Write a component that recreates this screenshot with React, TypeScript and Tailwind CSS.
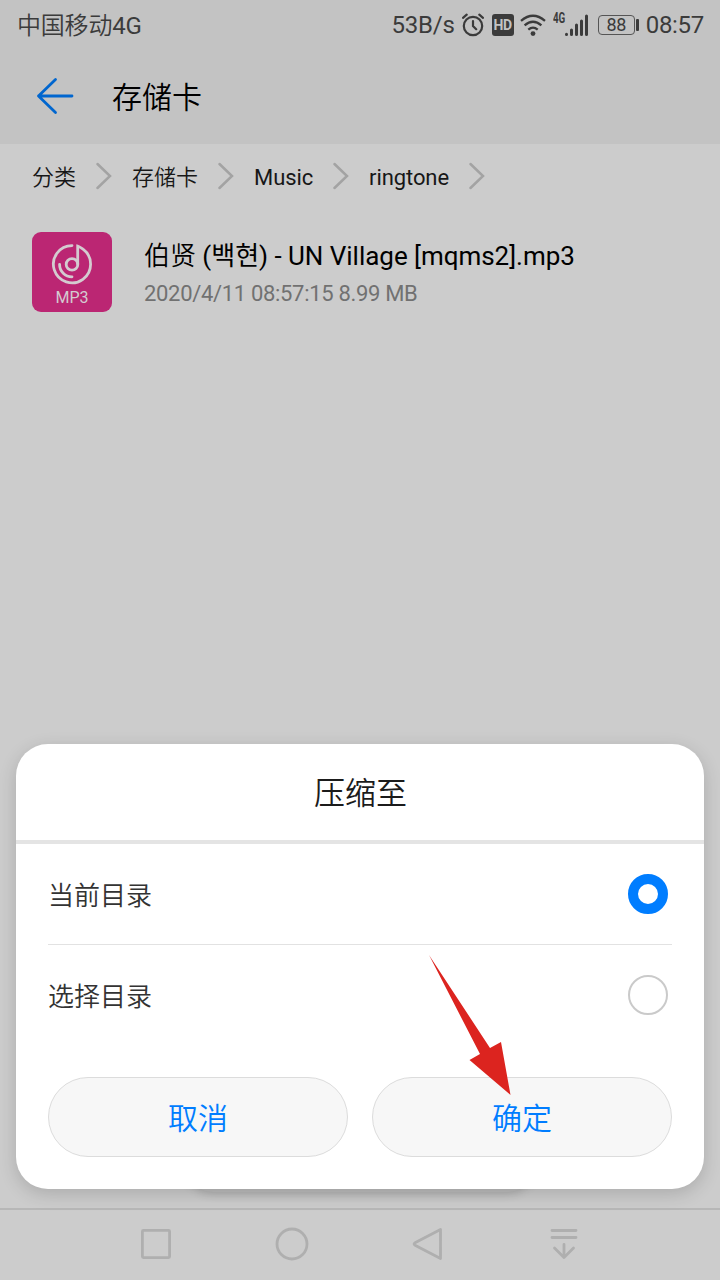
import React, { useState } from 'react';

const crumbs = ['分类', '存储卡', 'Music', 'ringtone'];
const options = ['当前目录', '选择目录'];

const StatusBar = () => (
	<div className="flex h-[50px] items-center justify-between pl-[17px] pr-4 text-2xl leading-none text-[#3b3b3b]">
		<span className="pt-px tracking-[-0.2px]">
			<span className="font-[350]">中国移动</span>4G
		</span>
		<div className="flex items-center">
			<span className="mr-[7px] tracking-[-0.2px]">53B/s</span>
			<svg className="mr-[8px]" width="22" height="24" viewBox="0 0 22 24" fill="none" stroke="#3b3b3b" strokeWidth="2.2" strokeLinecap="round">
				<circle cx="11" cy="13" r="9.2" />
				<path d="M11 8v5l3.2 3.2M1 4.8 4.7 1.7M21 4.8 17.3 1.7" />
			</svg>
			<span className="mr-[6px] flex h-[22px] w-[22px] items-center justify-center rounded-[3px] bg-[#3b3b3b] text-[14px] font-bold tracking-tight text-[#c3c3c3]">
				HD
			</span>
			<svg className="mr-[7px]" width="26" height="24" viewBox="0 0 26 24" fill="none" stroke="#3b3b3b" strokeWidth="2.3">
				<path d="M1 7.8Q13-2.4 25 7.8M4.6 12.4Q13 5.2 21.4 12.4M8.3 16.6Q13 12.6 17.7 16.6" />
				<circle cx="13" cy="20.6" r="2.4" fill="#3b3b3b" stroke="none" />
			</svg>
			<span className="-mt-[6px] h-[24px] w-[12px] origin-left scale-x-[0.7] text-[14px] font-bold leading-[16px]">4G</span>
			<svg className="-mt-px mr-[10px]" width="23" height="24" viewBox="0 0 23 24" fill="none" stroke="#3b3b3b" strokeWidth="3" strokeLinecap="round">
				<path d="M1.5 21.3v.2M6.5 17v4.5M11.5 12v9.5M16.5 8v13.5M21.5 3v18.5" />
			</svg>
			<span className="flex h-[20px] w-[37px] items-center justify-center rounded-[4px] border border-[#555] text-[18px] tracking-[-0.4px]">
				88
			</span>
			<span className="ml-px mr-[7px] h-[12px] w-[3px] rounded-[1px] bg-[#3b3b3b]" />
			<span className="tracking-[-0.3px]">08:57</span>
		</div>
	</div>
);

const Mp3Icon = () => (
	<div className="flex h-20 w-20 flex-col items-center rounded-[9px] bg-[#bb2673] pt-[11px] text-[#d4cbd0]">
		<svg width="42" height="42" viewBox="0 0 42 42" fill="none" stroke="currentColor" strokeWidth="2.8" strokeLinecap="round">
			<path d="M21 2.6A18.6 18.6 0 1 0 32 6.2Q28.5 3.5 26.7 3V21" />
			<circle cx="21" cy="21.4" r="5.8" />
			<path d="M8.6 21.4A12.4 12.4 0 0 0 21 33.8" />
		</svg>
		<span className="mt-[5px] text-[16px] leading-[16px]">MP3</span>
	</div>
);

const NavBar = () => (
	<div className="flex h-[72px] w-full items-start border-t-2 border-[#b7b7b7] pl-[138px] pt-[15px]">
		<svg width="444" height="40" viewBox="0 0 444 40" fill="none" stroke="#afafaf" strokeWidth="2.8" strokeLinecap="round" strokeLinejoin="round">
			<rect x="4.4" y="5.4" width="27.2" height="27.2" rx="1" />
			<circle cx="154" cy="19" r="15" />
			<path d="M302.5 4.5v29L277 20.2q-1.8-1.2 0-2.4z" />
			<path d="M414 5.5h24M414 12.5h24M426 19.5v13M416.5 23l9.5 9.6 9.5-9.6" />
		</svg>
	</div>
);

const App = () => {
	const [selected, setSelected] = useState(0);

	return (
		<div className="relative flex h-[1280px] w-[720px] flex-col overflow-hidden bg-[#cccccc] font-['Roboto','Noto_Sans_CJK_SC','Noto_Sans_CJK_KR',sans-serif]">
			<div className="h-36 bg-[#c3c3c3]">
				<StatusBar />
				<div className="flex h-[94px] items-center pl-[36px]">
					<svg className="mr-[38px] -mt-[3px]" width="38" height="38" viewBox="0 0 38 38" fill="none" stroke="#0066cf" strokeWidth="2.8" strokeLinecap="round" strokeLinejoin="round">
						<path d="M19.5 2.5 2.5 19l17 16.5M2.5 19H36" />
					</svg>
					<span className="pt-px text-[30px] font-[350] leading-none text-black">存储卡</span>
				</div>
			</div>

			<div className="flex h-[66px] items-center pl-8 text-[22px] text-[#171717]">
				{crumbs.map((crumb) => (
					<div key={crumb} className="flex items-center">
						<span className={/[a-z]/.test(crumb) ? 'tracking-[-0.1px]' : 'pt-px font-[350]'}>{crumb}</span>
						<svg className="-mt-[3px] ml-[20px] mr-[20px]" width="16" height="28" viewBox="0 0 16 28" fill="none" stroke="#a3a3a3" strokeWidth="2.5" strokeLinecap="round">
							<path d="M1.5 2 14 14 1.5 26" />
						</svg>
					</div>
				))}
			</div>

			<div className="flex flex-1 items-start gap-8 pl-8 pt-[22px]">
				<Mp3Icon />
				<div className="flex flex-col pt-[5px]">
					<span className="text-[26px] leading-[38px] tracking-[-0.03px] text-black">
						<span className="font-[350]">伯贤</span> (백현) - UN Village [mqms2].mp3
					</span>
					<span className="text-[22px] leading-[38px] tracking-[-0.32px] text-[#717171]">2020/4/11 08:57:15 8.99 MB</span>
				</div>
			</div>

			<NavBar />

			{/* toast hidden under the dialog */}
			<div className="absolute left-[183px] top-[1130px] h-[62px] w-[354px] rounded-[31px] bg-[#bcbcbc] shadow-[0_2px_10px_rgba(0,0,0,0.16)]" />

			<div className="absolute left-4 top-[744px] flex h-[445px] w-[688px] flex-col rounded-[32px] bg-white shadow-[0_5px_18px_rgba(0,0,0,0.16)]">
				<div className="flex h-[100px] items-center justify-center border-b-4 border-[#e4e4e4] pl-px pt-[5px] text-[31px] font-[350] text-[#1b1b1b]">
					压缩至
				</div>
				<div className="flex flex-col px-8">
					{options.map((option, i) => (
						<button
							key={option}
							className={`flex items-center justify-between pr-1 text-[26px] font-[350] text-[#333] ${
								i === 0 ? 'h-[101px] border-b border-[#e2e2e2]' : 'h-[100px]'
							}`}
							onClick={() => setSelected(i)}
						>
							<span className="pt-[4px]">{option}</span>
							<span
								className={`h-10 w-10 rounded-full ${
									selected === i ? 'border-10 border-[#007dff]' : 'border-2 border-[#cacaca]'
								}`}
							/>
						</button>
					))}
				</div>
				<div className="flex gap-6 px-8 pt-8 text-[30px] font-[350] text-[#007dff]">
					<button className="h-20 flex-1 rounded-full border border-[#dcdcdc] bg-[#f7f7f7] pt-[2px]">取消</button>
					<button className="h-20 flex-1 rounded-full border border-[#dcdcdc] bg-[#f7f7f7] pt-[2px]">确定</button>
				</div>
			</div>

			<svg className="pointer-events-none absolute left-[428px] top-[954px]" width="86" height="144" viewBox="0 0 86 144">
				<path d="M1 1 62 94 73 88 82.5 141 41.5 106 52 100z" fill="#dc241f" />
			</svg>
		</div>
	);
};

export default App;
